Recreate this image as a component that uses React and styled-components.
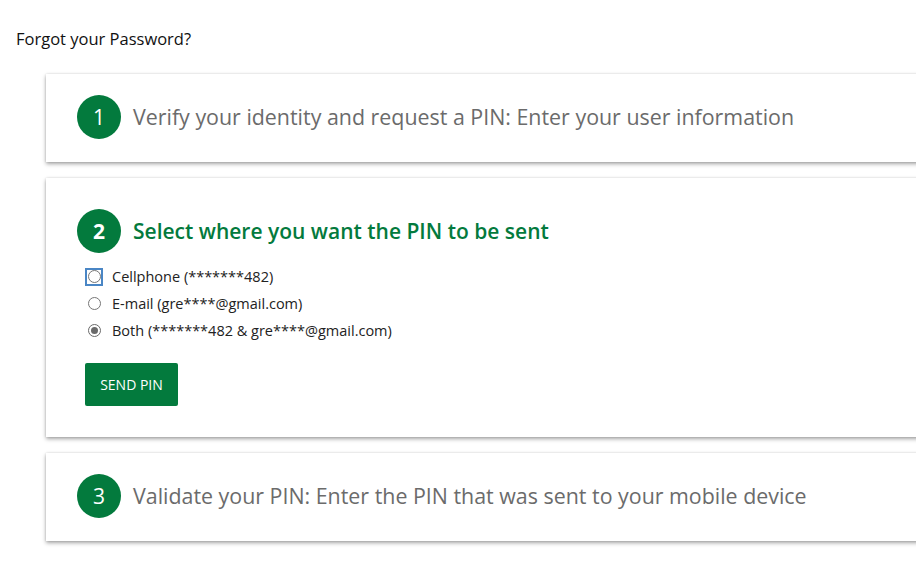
import React, { useState } from "react";
import styled, { createGlobalStyle } from "styled-components";

const GREEN = "#037a3d";

const Global = createGlobalStyle`
  html, body { margin: 0; padding: 0; background: #fff; overflow-x: hidden; }
  body { font-family: "Open Sans", "Liberation Sans", Arial, sans-serif; color: #222; }
`;

const Page = styled.div`
  padding: 29px 0 30px 16px;
`;

const Title = styled.h1`
  margin: 0 0 26px 0;
  font-size: 16.5px;
  font-weight: 400;
  line-height: 19px;
  color: #111;
`;

const Steps = styled.div`
  display: flex;
  flex-direction: column;
  gap: 16px;
  margin-left: 30px;
  width: 900px;
`;

const Card = styled.section`
  background: #fff;
  box-shadow: 0 2px 4px rgba(0, 0, 0, 0.35), 0 0 2px rgba(0, 0, 0, 0.12);
  padding: ${(p) => (p.$active ? "31px 31px 31px 31px" : "21px 31px 23px 31px")};
`;

const StepHeader = styled.div`
  display: flex;
  align-items: center;
  gap: 12px;
`;

const Badge = styled.div`
  width: 44px;
  height: 44px;
  border-radius: 50%;
  background: ${GREEN};
  color: #fff;
  display: flex;
  align-items: center;
  justify-content: center;
  font-size: 21px;
  line-height: 1;
  font-weight: ${(p) => (p.$active ? 700 : 400)};
  flex: none;
`;

const StepTitle = styled.h2`
  margin: 0;
  font-size: ${(p) => (p.$active ? "21px" : "21.4px")};
  line-height: 24px;
  font-weight: ${(p) => (p.$active ? 600 : 400)};
  color: ${(p) => (p.$active ? GREEN : "#6b6b6b")};
`;

const Options = styled.div`
  display: flex;
  flex-direction: column;
  margin: 10px 0 0 8px;
`;

const Option = styled.label`
  display: flex;
  align-items: center;
  height: 27px;
  font-size: 14.5px;
  color: #222;
  cursor: pointer;
`;

const RadioBox = styled.span`
  width: 18px;
  height: 18px;
  box-sizing: border-box;
  border: 2px solid ${(p) => (p.$focused ? "#4a86c5" : "transparent")};
  display: flex;
  align-items: center;
  justify-content: center;
  margin-right: 9px;
  flex: none;
`;

const RadioInput = styled.input`
  appearance: none;
  margin: 0;
  width: 13px;
  height: 13px;
  border-radius: 50%;
  border: 1px solid #767676;
  background: #fff;
  box-sizing: border-box;
  display: grid;
  place-items: center;
  outline: none;
  &:checked::after {
    content: "";
    width: 7px;
    height: 7px;
    border-radius: 50%;
    background: #6a6a6a;
  }
  &:checked {
    border-color: #6a6a6a;
  }
`;

const SendButton = styled.button`
  margin: 19px 0 0 8px;
  width: 93px;
  height: 43px;
  background: ${GREEN};
  color: #fff;
  border: none;
  border-radius: 2px;
  font-family: inherit;
  font-size: 14px;
  font-weight: 500;
  cursor: pointer;
`;

const options = [
  { id: "cell", label: "Cellphone (*******482)" },
  { id: "email", label: "E-mail (gre****@gmail.com)" },
  { id: "both", label: "Both (*******482 & gre****@gmail.com)" },
];

export default function App() {
  const [value, setValue] = useState("both");
  return (
    <>
      <Global />
      <Page>
        <Title>Forgot your Password?</Title>
        <Steps>
          <Card>
            <StepHeader>
              <Badge>1</Badge>
              <StepTitle>Verify your identity and request a PIN: Enter your user information</StepTitle>
            </StepHeader>
          </Card>
          <Card $active>
            <StepHeader>
              <Badge $active>2</Badge>
              <StepTitle $active>Select where you want the PIN to be sent</StepTitle>
            </StepHeader>
            <Options>
              {options.map((o, i) => (
                <Option key={o.id}>
                  <RadioBox $focused={i === 0}>
                    <RadioInput
                      type="radio"
                      name="dest"
                      checked={value === o.id}
                      onChange={() => setValue(o.id)}
                    />
                  </RadioBox>
                  {o.label}
                </Option>
              ))}
            </Options>
            <SendButton>SEND PIN</SendButton>
          </Card>
          <Card>
            <StepHeader>
              <Badge>3</Badge>
              <StepTitle>Validate your PIN: Enter the PIN that was sent to your mobile device</StepTitle>
            </StepHeader>
          </Card>
        </Steps>
      </Page>
    </>
  );
}
